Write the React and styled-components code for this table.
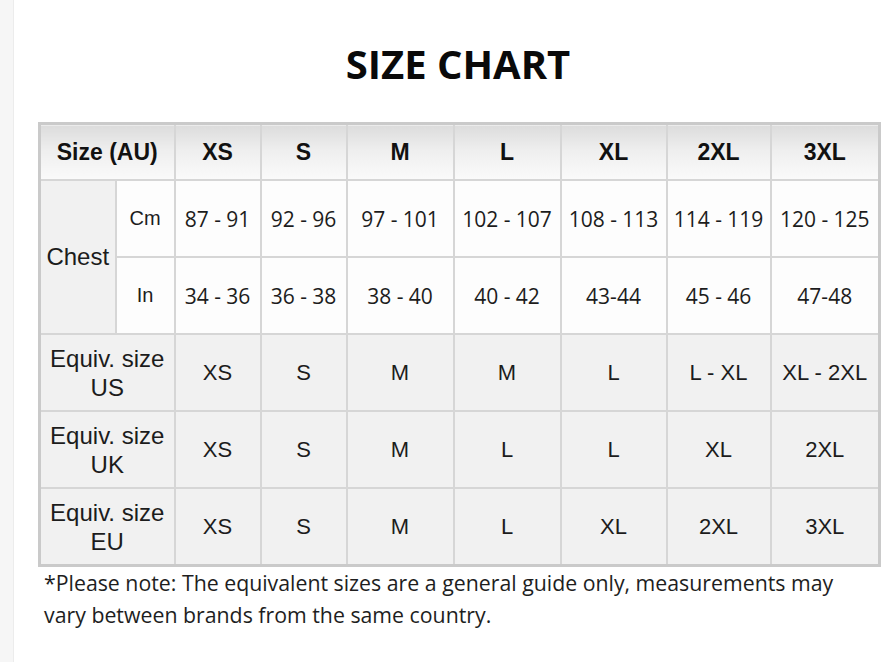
import React from 'react';
import styled, { createGlobalStyle } from 'styled-components';

const GlobalStyle = createGlobalStyle`
  html, body {
    margin: 0;
    padding: 0;
    background: #ffffff;
  }
  body {
    font-family: "Liberation Sans", Arial, sans-serif;
    color: #1a1a1a;
  }
`;

const Page = styled.div`
  display: flex;
  min-height: 662px;
  background: #ffffff;
`;

const SideStrip = styled.div`
  width: 13px;
  flex: none;
  background: #f6f6f6;
  border-right: 1px solid #ececec;
`;

const Content = styled.div`
  width: 840px;
  margin-left: 24px;
  display: flex;
  flex-direction: column;
`;

const Title = styled.h1`
  margin: 0;
  padding-top: 37px;
  height: 122px;
  box-sizing: border-box;
  text-align: center;
  font-family: "Open Sans", sans-serif;
  font-weight: 700;
  font-size: 40px;
  line-height: 54px;
  color: #0a0a0a;
`;

const Table = styled.table`
  width: 840px;
  table-layout: fixed;
  border-collapse: collapse;
  border: 3px solid #cacaca;
`;

const Head = styled.th`
  height: 54px;
  padding: 0;
  border: 2px solid #d6d6d6;
  background: linear-gradient(180deg, #dcdcdc 0%, #eeeeee 45%, #fafafa 100%);
  font-family: "Liberation Sans", Arial, sans-serif;
  font-weight: 700;
  font-size: 23px;
  color: #111111;
  text-align: center;
`;

const Cell = styled.td`
  height: 75px;
  padding: 0;
  border: 2px solid #d6d6d6;
  background: ${(p) => (p.$shade ? '#f1f1f1' : '#fdfdfd')};
  text-align: center;
  color: #1c1c1c;
  font-family: ${(p) =>
    p.$num ? '"Open Sans", sans-serif' : '"Liberation Sans", Arial, sans-serif'};
  font-size: ${(p) => p.$size || 22}px;
  line-height: ${(p) => p.$lh || 'normal'};
  white-space: nowrap;
`;

const Note = styled.p`
  margin: 0;
  padding: 0 0 0 6px;
  font-family: "Open Sans", sans-serif;
  font-size: 21.3px;
  line-height: 32px;
  color: #1e1e1e;
`;

const sizes = ['XS', 'S', 'M', 'L', 'XL', '2XL', '3XL'];
const cm = ['87 - 91', '92 - 96', '97 - 101', '102 - 107', '108 - 113', '114 - 119', '120 - 125'];
const inch = ['34 - 36', '36 - 38', '38 - 40', '40 - 42', '43-44', '45 - 46', '47-48'];
const equiv = [
  { region: 'US', values: ['XS', 'S', 'M', 'M', 'L', 'L - XL', 'XL - 2XL'] },
  { region: 'UK', values: ['XS', 'S', 'M', 'L', 'L', 'XL', '2XL'] },
  { region: 'EU', values: ['XS', 'S', 'M', 'L', 'XL', '2XL', '3XL'] },
];
const widths = [76, 59, 86, 86, 107, 107, 106, 104, 109];

export default function App() {
  return (
    <>
      <GlobalStyle />
      <Page>
        <SideStrip />
        <Content>
          <Title>SIZE CHART</Title>
          <Table>
            <colgroup>
              {widths.map((w, i) => (
                <col key={i} style={{ width: w }} />
              ))}
            </colgroup>
            <thead>
              <tr>
                <Head colSpan={2}>Size (AU)</Head>
                {sizes.map((s) => (
                  <Head key={s}>{s}</Head>
                ))}
              </tr>
            </thead>
            <tbody>
              <tr>
                <Cell rowSpan={2} $shade $size={24}>Chest</Cell>
                <Cell $size={20}>Cm</Cell>
                {cm.map((v) => (
                  <Cell key={v} $num $size={21}>{v}</Cell>
                ))}
              </tr>
              <tr>
                <Cell $size={20}>In</Cell>
                {inch.map((v, i) => (
                  <Cell key={i} $num $size={21}>{v}</Cell>
                ))}
              </tr>
              {equiv.map((row) => (
                <tr key={row.region}>
                  <Cell colSpan={2} $shade $size={24} $lh="29px">
                    Equiv. size
                    <br />
                    {row.region}
                  </Cell>
                  {row.values.map((v, i) => (
                    <Cell key={i} $shade>{v}</Cell>
                  ))}
                </tr>
              ))}
            </tbody>
          </Table>
          <Note>
            *Please note: The equivalent sizes are a general guide only, measurements may
            <br />
            vary between brands from the same country.
          </Note>
        </Content>
      </Page>
    </>
  );
}
